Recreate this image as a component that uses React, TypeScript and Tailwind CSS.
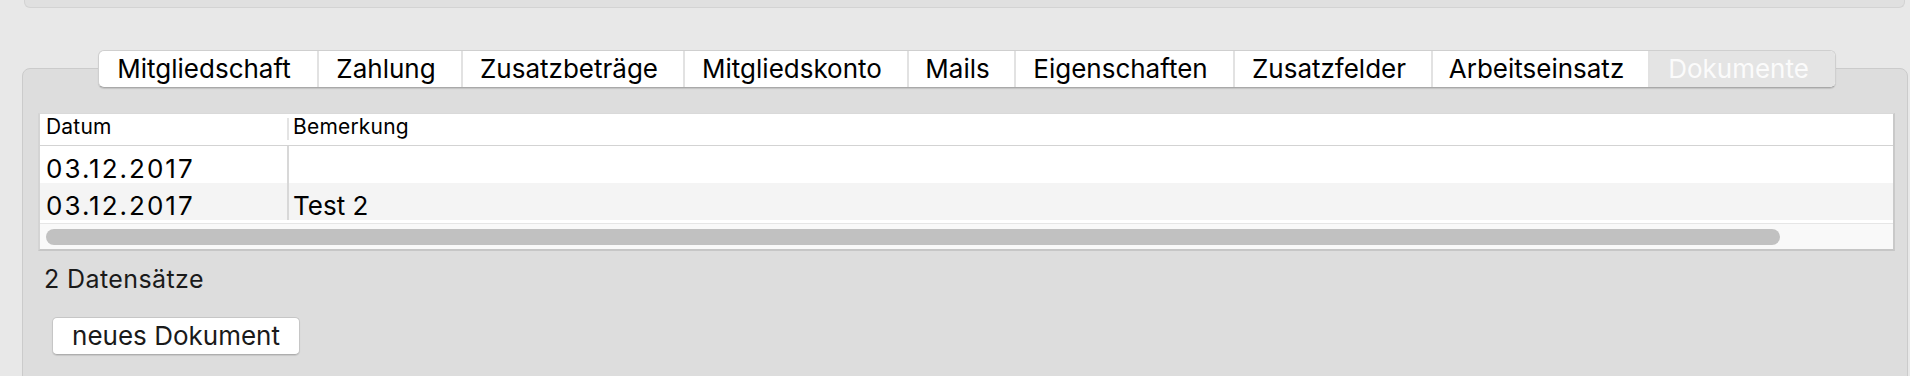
const tabs = [
  { label: 'Mitgliedschaft', width: 'w-[220px]' },
  { label: 'Zahlung', width: 'w-[144px]' },
  { label: 'Zusatzbeträge', width: 'w-[222px]' },
  { label: 'Mitgliedskonto', width: 'w-[224px]' },
  { label: 'Mails', width: 'w-[107px]' },
  { label: 'Eigenschaften', width: 'w-[219px]' },
  { label: 'Zusatzfelder', width: 'w-[198px]' },
  { label: 'Arbeitseinsatz', width: 'w-[217px]' },
]

const rows = [
  { datum: '03.12.2017', bemerkung: '', striped: false },
  { datum: '03.12.2017', bemerkung: 'Test 2', striped: true },
]

function TabBar() {
  return (
    <div className="relative z-10 ml-[98px] flex h-[38px] w-[1738px] overflow-hidden rounded-[6px] border border-[#cfcfcf] border-b-[#a9a9a9] bg-white shadow-[0_1px_1px_rgba(0,0,0,0.12)]">
      {tabs.map((t) => (
        <div
          key={t.label}
          className={`${t.width} flex h-full items-center justify-center border-r-2 border-[#e2e2e2] pr-[8px] text-[26px] leading-none text-black`}
        >
          {t.label}
        </div>
      ))}
      <div className="flex h-full flex-1 items-center justify-center bg-[#e4e4e4] pr-[8px] text-[26px] leading-none text-[#fbfbfb]">
        Dokumente
      </div>
    </div>
  )
}

function DocumentTable() {
  return (
    <div className="ml-[15px] w-[1857px] border-t border-l-2 border-r-2 border-b-2 border-t-[#d9d9d9] border-l-[#d4d4d4] border-r-[#c9c9c9] border-b-[#c6c6c6] bg-white">
      {/* header */}
      <div className="flex h-[32px] items-end border-b border-[#d3d3d3] pb-[8px] text-[21px] leading-none tracking-[0.2px] text-black">
        <div className="w-[247px] pl-[6px]">Datum</div>
        <div className="mb-[-3px] h-[22px] w-[2px] self-end bg-[#e4e4e4]" />
        <div className="pl-[4px]">Bemerkung</div>
      </div>
      {/* rows */}
      {rows.map((r, i) => (
        <div
          key={i}
          className={`flex items-end ${i === 0 ? 'h-[37px]' : 'h-[37px]'} ${r.striped ? 'bg-[#f4f4f4]' : 'bg-white'} overflow-hidden text-[26px] leading-none text-black`}
        >
          <div className="w-[247px] pb-[1px] pl-[6px] tracking-[2px]">{r.datum}</div>
          <div className="h-full w-[2px] bg-[#d8d8d8]" />
          <div className="pb-[1px] pl-[4px]">{r.bemerkung}</div>
        </div>
      ))}
      {/* horizontal scroller */}
      <div className="h-[3px] bg-white" />
      <div className="flex h-[26px] items-center border-t border-[#e6e6e6] bg-[#f9f9f9] pl-[6px]">
        <div className="h-[16px] w-[1734px] rounded-full bg-[#c1c1c1]" />
      </div>
    </div>
  )
}

export default function App() {
  return (
    <div className="h-[376px] w-full overflow-hidden bg-[#e8e8e8] font-['Inter','Liberation_Sans',sans-serif]">
      {/* upper panel, only its lower edge is visible */}
      <div className="ml-[24px] mr-[5px] h-[8px] rounded-b-[6px] border border-t-0 border-[#d3d3d3] bg-[#e0e0e0]" />

      <div className="pt-[42px]">
        <TabBar />

        <div className="ml-[22px] mr-[2px] -mt-[20px] h-[320px] rounded-t-[8px] border border-[#cbcbcb] bg-[#dddddd] pt-[44px]">
          <DocumentTable />

          <p className="ml-[21px] mt-[16px] text-[25px] leading-none tracking-[0.4px] text-[#1a1a1a]">2 Datensätze</p>

          <button className="ml-[29px] mt-[25px] flex h-[38px] w-[248px] items-center justify-center rounded-[5px] border border-[#c6c6c6] border-b-[#aeaeae] bg-white text-[26px] leading-none text-[#1a1a1a] shadow-[0_1px_1px_rgba(0,0,0,0.1)]">
            neues Dokument
          </button>
        </div>
      </div>
    </div>
  )
}
